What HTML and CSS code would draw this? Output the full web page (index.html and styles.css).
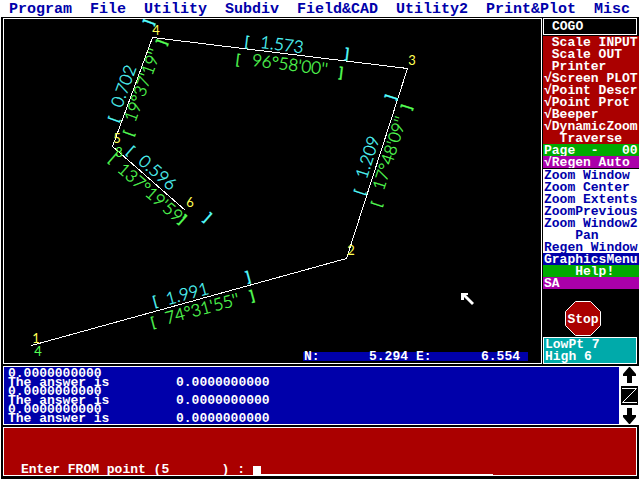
FILE: index.html
```html
<!DOCTYPE html>
<html lang="en">
<head>
<meta charset="utf-8">
<title>COGO</title>
<link rel="stylesheet" href="styles.css">
</head>
<body>
<div class="app">
  <nav class="menubar">
    <button>Program</button><button>File</button><button>Utility</button><button>Subdiv</button><button>Field&amp;CAD</button><button>Utility2</button><button>Print&amp;Plot</button><button>Misc</button>
  </nav>

  <main class="work">
    <section class="canvas">
      <svg class="drawing" viewBox="4 19 537 344" role="img" aria-label="Traverse drawing">
        <path class="line" d="M31.500 345.500L346.500 258.500L407.500 68.500L152.500 37.500L112.500 146.500L185.500 210.500"/>
        <g class="dist">
          <g transform="translate(247 41) rotate(7)"><text class="mark">[</text></g>
          <g transform="translate(282 44) rotate(7)"><text>1.573</text></g>
          <g transform="translate(347 53) rotate(7)"><text class="mark end">]</text></g>
          <g transform="translate(359 192) rotate(-72)"><text class="mark">[</text></g>
          <g transform="translate(367 157) rotate(-72)"><text>1.209</text></g>
          <g transform="translate(390 97) rotate(-72)"><text class="mark end">]</text></g>
          <g transform="translate(113 119) rotate(-70)"><text class="mark">[</text></g>
          <g transform="translate(123 86) rotate(-70)"><text>0.702</text></g>
          <g transform="translate(148 22) rotate(-70)"><text class="mark end">]</text></g>
          <g transform="translate(131 150) rotate(41)"><text class="mark">[</text></g>
          <g transform="translate(158 172) rotate(41)"><text>0.596</text></g>
          <g transform="translate(208 217) rotate(41)"><text class="mark end">]</text></g>
          <g transform="translate(155 301) rotate(-15)"><text class="mark">[</text></g>
          <g transform="translate(187 293) rotate(-15)"><text>1.991</text></g>
          <g transform="translate(248 276) rotate(-15)"><text class="mark end">]</text></g>
        </g>
        <g class="angle">
          <g transform="translate(238 59) rotate(7)"><text class="mark">[</text></g>
          <g transform="translate(290 64) rotate(7)"><text>96°58'00''</text></g>
          <g transform="translate(341 72) rotate(7)"><text class="mark end">]</text></g>
          <g transform="translate(376 204) rotate(-72)"><text class="mark">[</text></g>
          <g transform="translate(389 153) rotate(-72)"><text>17°48'09''</text></g>
          <g transform="translate(406 107) rotate(-72)"><text class="mark end">]</text></g>
          <g transform="translate(128 133) rotate(-70)"><text class="mark">[</text></g>
          <g transform="translate(142 85) rotate(-70)"><text>19°37'19''</text></g>
          <g transform="translate(161 42) rotate(-70)"><text class="mark end">]</text></g>
          <g transform="translate(113 158) rotate(41)"><text class="mark">[</text></g>
          <g transform="translate(152 193) rotate(41)"><text>137°19'59'</text></g>
          <g transform="translate(183 219) rotate(41)"><text class="mark end">]</text></g>
          <g transform="translate(153 322) rotate(-15)"><text class="mark">[</text></g>
          <g transform="translate(202 308) rotate(-15)"><text>74°31'55''</text></g>
          <g transform="translate(252 295) rotate(-15)"><text class="mark end">]</text></g>
        </g>
        <g class="point">
          <text x="36" y="343">1</text><text x="351" y="255">2</text><text x="412" y="65">3</text>
          <text x="156" y="35">4</text><text x="117" y="143">5</text><text x="190" y="207">6</text>
        </g>
        <g class="point code"><text x="38" y="356">4</text><text x="119" y="157">8</text></g>
        <path class="pointer" d="M461 293h7v2h-2l8 8-2 2-8-8v3h-3z"/>
      </svg>
      <div class="coords"><span>N:</span><output>5.294</output><span>E:</span><output>6.554</output></div>
    </section>

    <aside class="side">
      <h1 class="title">COGO</h1>
      <div class="group red">
        <button> Scale INPUT</button><button> Scale OUT</button><button> Printer</button><button>√Screen PLOT</button><button>√Point Descr</button><button>√Point Prot</button><button>√Beeper</button><button>√DynamicZoom</button><button>  Traverse</button>
      </div>
      <div class="group green"><button>Page  -   00</button></div>
      <div class="group purple"><button>√Regen Auto</button></div>
      <div class="group white">
        <button>Zoom Window</button><button>Zoom Center</button><button>Zoom Extents</button><button>ZoomPrevious</button><button>Zoom Window2</button><button>    Pan</button><button>Regen Window</button>
      </div>
      <div class="group blue"><button>GraphicsMenu</button></div>
      <div class="group green"><button>    Help!</button></div>
      <div class="group purple"><button>SA</button></div>
      <button class="stop" aria-label="Stop">
        <svg viewBox="0 0 38 36" width="38" height="36"><path d="M11.500 .5h15l10 10v14l-10 10h-15l-10-10v-14z"/><text x="19" y="22">Stop</text></svg>
      </button>
      <div class="status"><div>LowPt 7</div><div>High 6</div></div>
    </aside>
  </main>

  <section class="log">
    <div class="entries">
      <div>0.0000000000</div>
      <div>The answer is</div><div>0.0000000000</div>
      <div>0.0000000000</div>
      <div>The answer is</div><div>0.0000000000</div>
      <div>0.0000000000</div>
      <div>The answer is</div><div>0.0000000000</div>
    </div>
    <div class="scroller">
      <button aria-label="Scroll up"><svg viewBox="0 0 13 16" width="13" height="16"><path d="M6 0h1l6 7v2H9v7H4V9H0V7z"/></svg></button>
      <button aria-label="Zoom log"><svg viewBox="0 0 17 19" width="17" height="19"><path d="M0 0h17v19H0z"/><path class="zed" d="M1 2.500h14.500L1.500 16.500h14.500"/></svg></button>
      <button aria-label="Scroll down"><svg viewBox="0 0 13 16" width="13" height="16"><path d="M6 16h1l6-7V7H9V0H4v7H0v2z"/></svg></button>
    </div>
  </section>

  <form class="prompt">
    <label for="from"><span>Enter FROM point (5</span><span>) :</span></label>
    <div class="field"><input id="from" type="text" autocomplete="off"><i class="caret"></i></div>
  </form>
</div>
</body>
</html>
```
FILE: styles.css
```css
* { box-sizing: border-box; }

body {
  margin: 0;
  background: #fff;
  color: #fff;
  font: bold 13px/12px "Liberation Mono", monospace;
}

button {
  margin: 0;
  padding: 0;
  border: 0;
  background: none;
  color: inherit;
  font: inherit;
  text-align: left;
  white-space: pre;
}

svg { display: block; }

.app {
  display: flex;
  flex-direction: column;
  gap: 2px;
  min-height: calc(100vh - 1px);
  margin: 0 1px 1px;
  padding-bottom: 3px;
  background: #000;
}

.menubar {
  display: flex;
  gap: 18px;
  height: 17px;
  padding: 3px 8px 0;
  margin-bottom: -1px;
  background: #fff;
  color: #0000aa;
  font-size: 15px;
  line-height: 14px;
}

.work {
  display: flex;
  gap: 1px;
  padding-left: 2px;
}

.canvas {
  position: relative;
  flex: 1;
  min-width: 0;
  border: 1px solid #fff;
}

.drawing {
  width: 100%;
  height: auto;
}

.drawing text {
  font: 300 17px Lato, sans-serif;
  text-anchor: middle;
}

.drawing .dist text,
.drawing .angle text { dominant-baseline: central; }

.drawing .mark {
  font-size: 14px;
  font-weight: 400;
}

.drawing .end { font-weight: 700; }

.drawing .point text { font: 13px Lato, sans-serif; }

.line {
  fill: none;
  stroke: #fff;
  stroke-width: 1;
  shape-rendering: crispEdges;
}

.dist { fill: #55ffff; stroke: #55ffff; }
.angle { fill: #55ff55; stroke: #55ff55; }

.dist text,
.angle text { stroke-width: 0.3; }

.point { fill: #ffff55; }
.point.code { fill: #55ff55; }
.pointer { fill: #fff; }

.coords {
  position: absolute;
  right: 13px;
  bottom: 2px;
  display: grid;
  grid-template-columns: 16px 88px 24px 88px;
  width: 225px;
  height: 9px;
  padding-left: 1px;
  background: #0000aa;
  line-height: 9px;
}

.coords output { text-align: right; }
.coords span:nth-of-type(2) { padding-left: 8px; }

.side {
  display: flex;
  flex-direction: column;
  flex: 0 0 96px;
  width: 96px;
}

.title {
  margin: 0 2px 1px 0;
  padding-left: 8px;
  border: 1px solid #fff;
  font: inherit;
  line-height: 15px;
}

.group {
  display: grid;
  overflow: hidden;
  padding-left: 1px;
}

.group button {
  height: 12px;
  padding-top: 1px;
  line-height: 11px;
}

.red { background: #aa0000; }
.green { background: #00aa00; }
.purple { background: #aa00aa; }
.blue { background: #0000aa; }

.white {
  margin-top: 1px;
  background: #fff;
  color: #0000aa;
}

.stop {
  margin: auto auto 0 21px;
  white-space: normal;
}

.stop path {
  fill: #aa0000;
  stroke: #fff;
}

.stop text {
  fill: #fff;
  font: bold 13px "Liberation Mono", monospace;
  text-anchor: middle;
}

.status {
  height: 27px;
  margin-right: 2px;
  padding: 1px;
  border: 1px solid #fff;
  background: #00aaaa;
}

.log {
  display: flex;
  margin-left: 2px;
  border: 1px solid #fff;
  border-right: 0;
  background: #fff;
}

.entries {
  display: grid;
  flex: 1;
  grid-template-columns: 168px 1fr;
  padding: 2px 4px 1px;
  background: #0000aa;
  line-height: 9px;
}

.entries div:nth-child(3n + 1) { grid-column: 1 / -1; }

.scroller {
  display: flex;
  flex-direction: column;
  align-items: center;
  justify-content: space-between;
  width: 20px;
}

.zed {
  fill: none;
  stroke: #fff;
}

.prompt {
  display: flex;
  flex: 1;
  align-items: flex-end;
  margin: 0 2px;
  padding-left: 17px;
  border: 1px solid #fff;
  background: #aa0000;
  line-height: 10px;
}

.prompt label {
  display: flex;
  justify-content: space-between;
  width: 224px;
  white-space: pre;
}

.field {
  display: flex;
  width: 240px;
  margin-left: 8px;
  border-bottom: 1px solid #fff;
}

.field input {
  order: 1;
  flex: 1;
  min-width: 0;
  height: 8px;
  padding: 0;
  border: 0;
  outline: 0;
  background: none;
  color: inherit;
  font: inherit;
}

.caret {
  width: 8px;
  height: 8px;
  background: #fff;
}
```
